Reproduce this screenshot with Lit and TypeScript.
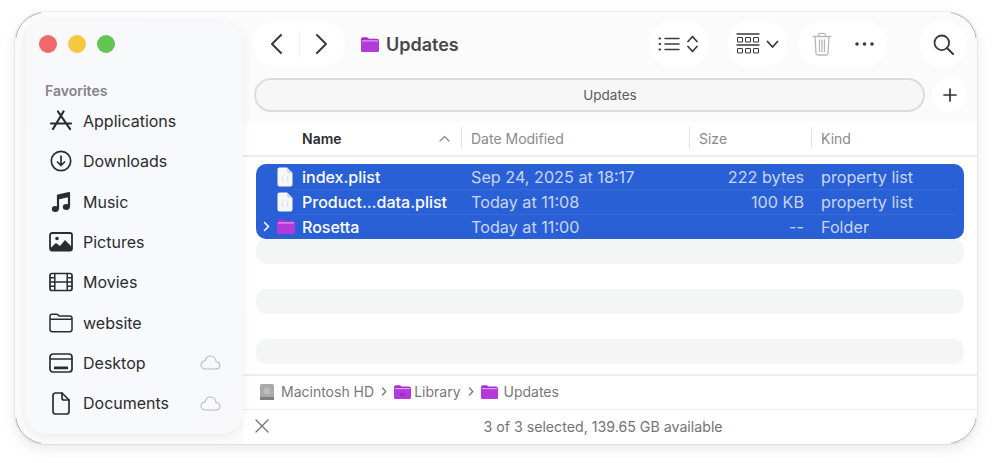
import { LitElement, html, css, svg } from "lit";
import { customElement } from "lit/decorators.js";

const s = (w: number, h: number, body: unknown, cls = "") =>
  html`<svg class=${cls} width=${w} height=${h} viewBox="0 0 ${w} ${h}" fill="none" stroke="currentColor" stroke-linecap="round" stroke-linejoin="round">${body}</svg>`;

const folder = (w = 18, h = 15, glyph = false) => html`<svg width=${w} height=${h} viewBox="0 0 18 15">
  <path d="M0 2.2C0 1 .8.2 2 .2h3.6c.8 0 1.2.3 1.7.8l.7.7h8c1.2 0 2 .8 2 2V13c0 1.2-.8 2-2 2H2c-1.200 0-2-.8-2-2z" fill="#a92fd0"/>
  <path d="M0 3.600h18V13c0 1.200-.8 2-2 2H2c-1.200 0-2-.8-2-2z" fill="#b23ad8"/>
  <path d="M1 3.900h16" stroke="#e6b8f2" stroke-width="1"/>
  ${glyph ? svg`<path d="M6 9.500h6M7 11.500h4" stroke="#8d22ad" stroke-width="1"/>` : ""}
</svg>`;

const doc = html`<svg width="16" height="20" viewBox="0 0 16 20">
  <path d="M2.500 .5H10l5.500 5.500v11.500c0 1.100-.9 2-2 2h-11c-1.100 0-2-.9-2-2v-15c0-1.100.9-2 2-2z" fill="#f6f7f9"/>
  <path d="M10 .5v3.500c0 1.100.9 2 2 2h3.500z" fill="#d5d9e0"/>
  <path d="M6.500 8.500c-1 0-1 1-1 2s-1 1-1 1 1 0 1 1 0 2 1 2M9.500 8.500c1 0 1 1 1 2s1 1 1 1-1 0-1 1 0 2-1 2" stroke="#d0d3da" stroke-width=".8" fill="none"/>
</svg>`;

const cloud = s(21, 15, svg`<path d="M5.500 14h10.300c2.200 0 4-1.500 4-3.600 0-2-1.500-3.500-3.600-3.600C15.700 3.400 13.300 1 10.600 1 7.800 1 5.800 3 5.300 5.700 2.900 6 1 7.700 1 10c0 2.300 2 4 4.500 4z" stroke="#b9b9bb" stroke-width="1.100"/>`, "cloud");

const sideIcons: Record<string, unknown> = {
  app: s(24, 22, svg`<g stroke-width="2.200"><path d="M9 1.500l12 17.500M14.500 1.500L4 19M2 13.500h20"/></g>`),
  down: s(22, 22, svg`<circle cx="11" cy="11" r="9.700" stroke-width="1.700"/><path d="M11 6v9.500M7.500 12l3.500 3.500 3.500-3.500" stroke-width="1.700"/>`),
  music: s(20, 22, svg`<path d="M7 17.500V4.500L18 2v13.500" stroke-width="2.200"/><path d="M7 5v3l11-2.500V2.500z" fill="currentColor" stroke-width="1.200"/><ellipse cx="4.300" cy="18" rx="3.500" ry="3" fill="currentColor" stroke="none"/><ellipse cx="15.300" cy="16" rx="3.500" ry="3" fill="currentColor" stroke="none"/>`),
  pics: s(24, 20, svg`<rect x="1" y="1" width="22" height="17.500" rx="2" stroke-width="1.800"/><circle cx="8" cy="6.500" r="1.800" fill="currentColor" stroke="none"/><path d="M1.500 16l5.500-5 4 3 5-6 7 7v2.500c0 .5-.5 1-1 1H2.500c-.5 0-1-.5-1-1z" fill="currentColor" stroke="none"/>`),
  film: s(24, 20, svg`<rect x="1" y="1.500" width="22" height="17" rx="2" stroke-width="1.700"/><path d="M5.800 1.500v17M18.200 1.500v17M5.800 10h12.400M1 5.700h4.800M1 10h4.800M1 14.300h4.800M18.200 5.700H23M18.200 10H23M18.200 14.300H23" stroke-width="1.500"/>`),
  dir: s(24, 20, svg`<path d="M1 3.500C1 2.200 1.900 1.300 3.200 1.300h4.300c.8 0 1.300.3 1.800.8l.8.9h10.700C22 3 23 4 23 5.200v11.300c0 1.200-1 2.200-2.200 2.200H3.200C2 18.700 1 17.700 1 16.500zM1 6.300h22" stroke-width="1.500"/>`),
  desk: s(24, 20, svg`<rect x="1" y="1" width="22" height="18" rx="3" stroke-width="1.700"/><path d="M1.300 6h21.400" stroke-width="1.500"/><rect x="5" y="13.500" width="14" height="2.800" rx=".5" fill="currentColor" stroke="none"/>`),
  file: s(18, 23, svg`<path d="M3.500 1H10l7 7v11.500c0 1.400-1.100 2.500-2.500 2.500h-11C2.100 22 1 20.900 1 19.500v-16C1 2.100 2.100 1 3.500 1z" stroke-width="1.700"/><path d="M10 1v5c0 1.100.9 2 2 2h5" stroke-width="1.700"/>`),
};

const side = [
  ["app", "Applications", false],
  ["down", "Downloads", false],
  ["music", "Music", false],
  ["pics", "Pictures", false],
  ["film", "Movies", false],
  ["dir", "website", false],
  ["desk", "Desktop", true],
  ["file", "Documents", true],
] as const;

const files = [
  { kind: "doc", name: "index.plist", date: "Sep 24, 2025 at 18:17", size: "222 bytes", type: "property list" },
  { kind: "doc", name: "Product…data.plist", date: "Today at 11:08", size: "100 KB", type: "property list" },
  { kind: "dir", name: "Rosetta", date: "Today at 11:00", size: "--", type: "Folder" },
];

const chev = s(6, 9, svg`<path d="M1.500 1l3.300 3.500L1.500 8" stroke="#777" stroke-width="1.300"/>`);

@customElement("app-root")
export class AppRoot extends LitElement {
  static styles = css`
    :host { display: block; width: 992px; height: 463px; box-sizing: border-box; padding: 12px 15px 19px; background: #fff;
      font-family: Inter, "Noto Sans", "Liberation Sans", sans-serif; color: #2c2c2e; overflow: hidden; }
    svg { display: block; flex: none; }
    .window { position: relative; height: 432px; display: flex; box-sizing: border-box; padding: 9px 0 10px 10px; background: #fbfbfb; border-radius: 30px;
      box-shadow: 0 5px 14px rgba(0,0,0,.09), 0 0 0 1px #f1f1f1; }
    .window::after { content: ""; position: absolute; inset: 0; border-radius: 30px; border: 1px solid #a9a9a9; pointer-events: none;
      -webkit-mask: linear-gradient(#000 0 0) left top/26px 26px no-repeat, linear-gradient(#000 0 0) right top/26px 26px no-repeat, linear-gradient(#000 0 0) left bottom/26px 26px no-repeat, linear-gradient(#000 0 0) right bottom/26px 26px no-repeat;
      mask: linear-gradient(#000 0 0) left top/26px 26px no-repeat, linear-gradient(#000 0 0) right top/26px 26px no-repeat, linear-gradient(#000 0 0) left bottom/26px 26px no-repeat, linear-gradient(#000 0 0) right bottom/26px 26px no-repeat; }
    .sidebar { position: relative; z-index: 1; width: 218px; flex: none; box-sizing: border-box; padding: 14px 0 0; border-radius: 22px;
      background: linear-gradient(135deg, #f8f8f9, #f7f9fd 55%, #f8f8f9); box-shadow: 0 2px 10px rgba(0,0,0,.07); }
    .lights { display: flex; gap: 11px; padding-left: 14px; }
    .lights i { width: 18px; height: 18px; border-radius: 50%; }
    .red { background: #f06a69; }
    .yellow { background: #f4c93f; }
    .green { background: #62c554; }
    .fav { margin: 29px 0 0 20px; height: 17px; line-height: 17px; font-size: 14px; font-weight: 600; color: #858587; }
    .nav { margin-top: 2px; }
    .nav-row { display: flex; align-items: center; height: 40.3px; font-size: 16px; color: #2c2c2e; }
    .nav-icon { width: 36px; margin-left: 18px; margin-right: 4px; display: flex; justify-content: center; }
    .nav-row span { flex: 1; }
    .cloud { margin-right: 22px; }

    .main { flex: 1; min-width: 0; display: flex; flex-direction: column; margin-top: -9px; margin-bottom: -10px; }
    .toolbar { display: flex; align-items: center; padding: 9px 10px 0; height: 46px; }
    .pill { height: 46px; background: #fff; border-radius: 23px; display: flex; align-items: center; box-sizing: border-box; color: #3a3a3c; }
    .nav-pill { width: 92px; }
    .nav-pill div { flex: 1; display: flex; justify-content: center; }
    .nav-pill b { width: 1px; height: 26px; background: #efefef; }
    .title { margin-left: 16px; display: flex; align-items: center; gap: 7px; font-size: 18px; font-weight: 600; color: #48484a; flex: 1; }
    .view { width: 59px; margin-right: 20px; justify-content: center; gap: 6px; }
    .group { width: 59px; margin-right: 12px; justify-content: center; gap: 6px; }
    .actions { width: 88px; margin-right: 33px; justify-content: space-between; padding: 0 12px 0 13px; }
    .search { width: 47px; justify-content: center; }
    .tabs { display: flex; align-items: center; gap: 7px; padding: 10px 10px 10px 11px; }
    .tab { flex: 1; height: 34px; box-sizing: border-box; border: 2px solid #dcdcda; border-radius: 17px; background: #f7f7f7; display: flex; align-items: center; justify-content: center;
      padding-left: 41px; font-size: 13.5px; color: #5a5a5c; }
    .plus { width: 35px; height: 35px; border-radius: 50%; background: #fff; display: flex; align-items: center; justify-content: center; color: #333; }
    .list { flex: 1; background: #fff; padding: 0 13px; }
    .head, .row { display: grid; grid-template-columns: 205px 228px 122px 1fr; align-items: center; }
    .head { height: 35px; box-sizing: border-box; margin: 0 -13px; padding: 0 13px; border-bottom: 2px solid #ededed; font-size: 14px; color: #8a8a8c; }
    .cell { display: flex; align-items: center; height: 100%; padding-left: 10px; position: relative; box-sizing: border-box; }
    .head .cell + .cell::before { content: ""; position: absolute; left: 0; top: 5px; bottom: 6px; width: 1px; background: #e4e4e4; }
    .head .name { padding-left: 46px; font-weight: 600; color: #2c2c2e; justify-content: space-between; padding-right: 11px; }
    .selection { margin-top: 7px; background: #2a60d6; border-radius: 10px; overflow: hidden; }
    .row { height: 25px; color: #fff; position: relative; }
    .row + .row::before { content: ""; position: absolute; left: 37px; right: 7px; top: 0; height: 1px; background: rgba(255,255,255,.07); }
    .row .cell { color: #c8d6f6; font-size: 16.2px; padding-left: 10px; }
    .row .name { color: #fff; font-weight: 450; font-size: 16px; padding-left: 0; }
    .disc { width: 21px; display: flex; justify-content: flex-end; padding-right: 7px; box-sizing: border-box; }
    .ricon { width: 25px; display: flex; justify-content: flex-start; }
    .row .size { justify-content: flex-end; padding: 0 7px 0 0; }
    .stripe { height: 25px; }
    .stripe:nth-child(odd) { background: #f4f5f5; border-radius: 10px; }
    .pathbar { height: 35px; box-sizing: border-box; border-top: 2px solid #ededed; background: #fff; display: flex; align-items: center; padding: 0 15px 2px 17px; font-size: 14px; color: #78787a; gap: 7px; }
    .crumb { display: flex; align-items: center; gap: 3px; }
    .crumb.hd { gap: 7px; }
    .crumb.last { gap: 6px; }
    .status { height: 35px; box-sizing: border-box; border-top: 1px solid #ededed; background: #fff; border-radius: 0 0 30px 0; display: flex; align-items: center; padding: 0 40px 2px 12px; font-size: 14.2px; color: #737375; }
    .status span { flex: 1; text-align: center; }
  `;

  render() {
    return html`<div class="window">
      <aside class="sidebar">
        <div class="lights"><i class="red"></i><i class="yellow"></i><i class="green"></i></div>
        <div class="fav">Favorites</div>
        <div class="nav">
          ${side.map(([ic, label, hasCloud]) => html`<div class="nav-row">
            <div class="nav-icon">${sideIcons[ic]}</div><span>${label}</span>${hasCloud ? cloud : ""}
          </div>`)}
        </div>
      </aside>
      <main class="main">
        <div class="toolbar">
          <div class="pill nav-pill">
            <div>${s(12, 22, svg`<path d="M11 2L2 11l9 9" stroke-width="2"/>`)}</div><b></b>
            <div>${s(12, 22, svg`<path d="M1 2l9 9-9 9" stroke-width="2"/>`)}</div>
          </div>
          <div class="title">${folder(18, 15)}<span>Updates</span></div>
          <div class="pill view">
            ${s(22, 16, svg`<path d="M7 2.500h14M7 8h14M7 13.500h14" stroke-width="1.500"/><path d="M1.500 2.500h.6M1.500 8h.6M1.500 13.500h.6" stroke-width="2"/>`)}
            ${s(13, 20, svg`<path d="M2 7.500l4.500-5 4.500 5M2 12.500l4.500 5 4.500-5" stroke-width="1.700"/>`)}
          </div>
          <div class="pill group">
            ${s(24, 23, svg`<path d="M1 1h22M1 12h22" stroke-width="1.300"/><g stroke-width="1.100"><rect x="1.500" y="4.500" width="5" height="4.500" rx=".8"/><rect x="9.500" y="4.500" width="5" height="4.500" rx=".8"/><rect x="17.500" y="4.500" width="5" height="4.500" rx=".8"/><rect x="1.500" y="15.500" width="5" height="4.500" rx=".8"/><rect x="9.500" y="15.500" width="5" height="4.500" rx=".8"/><rect x="17.500" y="15.500" width="5" height="4.500" rx=".8"/></g>`)}
            ${s(13, 9, svg`<path d="M1.500 1.500l5 5.500 5-5.500" stroke-width="1.800"/>`)}
          </div>
          <div class="pill actions">
            ${s(20, 24, svg`<g stroke="#b8b8ba" stroke-width="1.300"><path d="M1 4.500h18M6.500 4.500V3c0-1 .7-1.700 1.700-1.700h3.600c1 0 1.700.7 1.700 1.700v1.500M3 4.500l1 17c.1 1 .8 1.500 1.700 1.500h8.600c.9 0 1.600-.5 1.700-1.500l1-17M7.500 8v11.500M10 8v11.500M12.500 8v11.500"/></g>`)}
            ${s(21, 6, svg`<circle cx="3" cy="3" r="1.800" fill="currentColor" stroke="none"/><circle cx="10.500" cy="3" r="1.800" fill="currentColor" stroke="none"/><circle cx="18" cy="3" r="1.800" fill="currentColor" stroke="none"/>`)}
          </div>
          <div class="pill search">
            ${s(21, 21, svg`<circle cx="8.800" cy="8.800" r="7.300" stroke-width="1.800"/><path d="M14 14l6 6" stroke-width="2"/>`)}
          </div>
        </div>
        <div class="tabs">
          <div class="tab">Updates</div>
          <div class="plus">${s(14, 14, svg`<path d="M7 1v12M1 7h12" stroke-width="1.700"/>`)}</div>
        </div>
        <div class="list">
          <div class="head">
            <div class="cell name"><span>Name</span>${s(11, 7, svg`<path d="M1 6l4.500-4.500L10 6" stroke="#8a8a8c" stroke-width="1.300"/>`)}</div>
            <div class="cell">Date Modified</div>
            <div class="cell">Size</div>
            <div class="cell">Kind</div>
          </div>
          <div class="selection">
            ${files.map((f) => html`<div class="row">
              <div class="cell name">
                <div class="disc">${f.kind === "dir" ? s(7, 11, svg`<path d="M1.500 1.500l4 4-4 4" stroke="#fff" stroke-width="1.600"/>`) : ""}</div>
                <div class="ricon">${f.kind === "dir" ? folder(18, 15) : doc}</div>
                <span>${f.name}</span>
              </div>
              <div class="cell">${f.date}</div>
              <div class="cell size">${f.size}</div>
              <div class="cell">${f.type}</div>
            </div>`)}
          </div>
          <div>
            <div class="stripe"></div><div class="stripe"></div><div class="stripe"></div><div class="stripe"></div><div class="stripe"></div>
          </div>
        </div>
        <div class="pathbar">
          <div class="crumb hd">
            ${s(14, 16, svg`<rect x="0" y="0" width="14" height="16" rx="1.500" fill="#a9a9a9" stroke="none"/><circle cx="7" cy="7" r="3.500" fill="#bdbdbd" stroke="none"/><rect x="0" y="13" width="14" height="3" fill="#7f7f7f" stroke="none"/>`)}
            <span>Macintosh HD</span>
          </div>
          ${chev}
          <div class="crumb">${folder(17, 14, true)}<span>Library</span></div>
          ${chev}
          <div class="crumb last">${folder(17, 14)}<span>Updates</span></div>
        </div>
        <div class="status">
          ${s(14, 14, svg`<path d="M1 1l12 12M13 1L1 13" stroke="#6e6e70" stroke-width="1.200"/>`)}
          <span>3 of 3 selected, 139.65 GB available</span>
        </div>
      </main>
    </div>`;
  }
}
